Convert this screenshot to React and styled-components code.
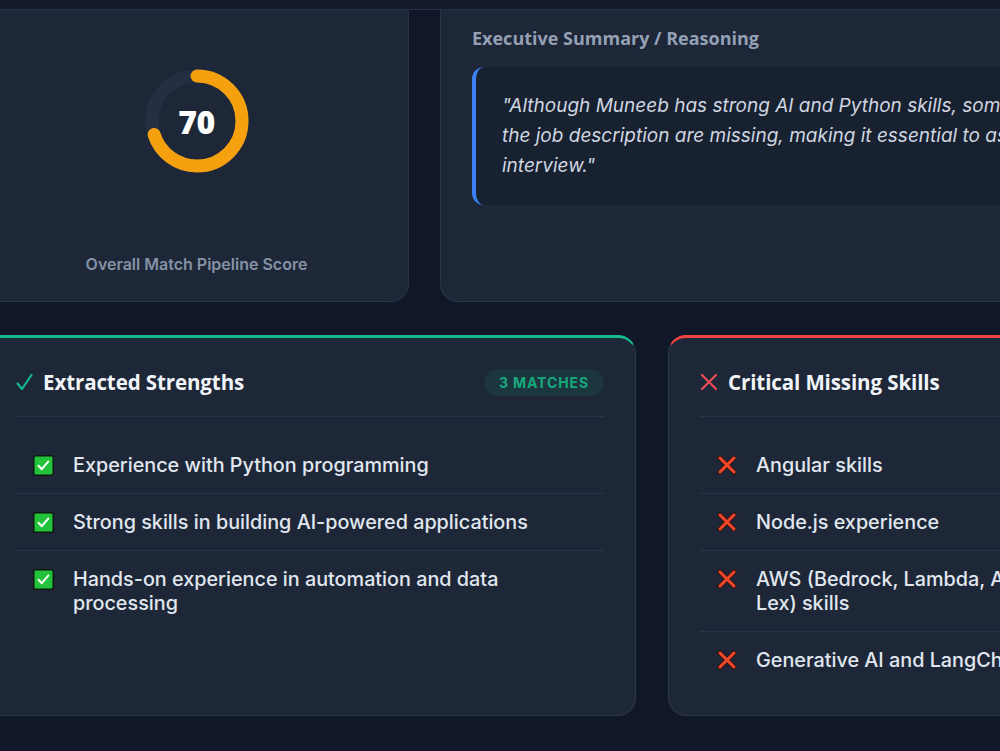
import React from 'react';
import styled, { createGlobalStyle } from 'styled-components';

const GlobalStyle = createGlobalStyle`
  html, body {
    margin: 0;
    padding: 0;
    background: #0f1729;
    overflow: hidden;
  }
  body {
    font-family: Inter, "Noto Sans", sans-serif;
    color: #e2e8f0;
  }
  * { box-sizing: border-box; }
`;

const TopBar = styled.div`
  position: fixed;
  top: 0;
  left: 0;
  right: 0;
  height: 10px;
  background: #121a2b;
  border-bottom: 1px solid #263145;
  z-index: 5;
`;

const Page = styled.main`
  width: 1336px;
  margin: -10px 0 0 -16px;
  display: flex;
  flex-direction: column;
  gap: 33px;
`;

const TopRow = styled.div`
  display: grid;
  grid-template-columns: 425px 1fr;
  gap: 31px;
`;

const BottomRow = styled.div`
  display: grid;
  grid-template-columns: 1fr 1fr;
  gap: 32px;
`;

const Card = styled.section`
  background: #1d2738;
  border: 1px solid rgba(148, 163, 184, 0.1);
  border-radius: 18px;
  height: 312px;
`;

const ScoreCard = styled(Card)`
  display: flex;
  flex-direction: column;
  align-items: center;
  justify-content: space-between;
  padding: 77px 24px 27px;
`;

const Ring = styled.div`
  position: relative;
  width: 106px;
  height: 106px;
`;

const RingValue = styled.span`
  position: absolute;
  inset: 0;
  display: flex;
  align-items: center;
  justify-content: center;
  font-family: "Open Sans", "Noto Sans", sans-serif;
  font-weight: 800;
  font-size: 32px;
  color: #ffffff;
  letter-spacing: -0.5px;
`;

const ScoreLabel = styled.p`
  margin: 0;
  font-size: 16px;
  line-height: 20px;
  font-weight: 600;
  color: #8592a6;
`;

const SummaryCard = styled(Card)`
  padding: 35px 31px 31px;
`;

const SectionTitle = styled.h3`
  margin: 0 0 17px;
  font-family: "Open Sans", "Noto Sans", sans-serif;
  font-size: 18px;
  line-height: 24px;
  font-weight: 700;
  color: #94a0b3;
`;

const Quote = styled.blockquote`
  margin: 0;
  background: #182130;
  border-left: 4px solid #3b82f6;
  border-radius: 12px;
  padding: 24px 26px;
  font-style: italic;
  font-size: 19px;
  line-height: 30px;
  color: #cfd6e0;
`;

const ListCard = styled.section`
  background: #1d2738;
  border: 1px solid rgba(148, 163, 184, 0.1);
  border-top: 3px solid ${p => p.$accent};
  border-radius: 18px;
  height: 381px;
  padding: 0 31px;
`;

const CardHeader = styled.header`
  display: flex;
  align-items: center;
  justify-content: space-between;
  padding: 30px 0 20px;
  border-bottom: 1px solid #2a3548;
`;

const HeaderTitle = styled.h2`
  margin: 0;
  display: flex;
  align-items: center;
  gap: 10px;
  font-family: "Open Sans", "Noto Sans", sans-serif;
  font-size: 20.5px;
  line-height: 28px;
  font-weight: 700;
  letter-spacing: -0.1px;
  color: #f1f5f9;
`;

const Badge = styled.span`
  background: rgba(16, 185, 129, 0.1);
  color: #17a97c;
  font-size: 14px;
  font-weight: 700;
  letter-spacing: 0.9px;
  line-height: 27px;
  padding: 0 15px;
  border-radius: 14px;
`;

const List = styled.ul`
  list-style: none;
  margin: 20px 0 0;
  padding: 0;
`;

const Item = styled.li`
  display: flex;
  align-items: flex-start;
  gap: 19px;
  padding: 16px 19px 16px 17px;
  font-size: 19.8px;
  line-height: 24px;
  font-weight: 500;
  color: #e1e7ef;
  & + & { border-top: 1px solid #2a3548; }
`;

const IconSlot = styled.span`
  flex: none;
  display: flex;
  align-items: center;
  height: 24px;
`;

const ScoreRing = ({ value }) => {
  const r = 45;
  const c = 2 * Math.PI * r;
  return (
    <Ring>
      <svg width="106" height="106" viewBox="0 0 106 106">
        <circle cx="53" cy="53" r={r} fill="none" stroke="#243042" strokeWidth="13" />
        <circle
          cx="53" cy="53" r={r} fill="none" stroke="#f5a00f" strokeWidth="13"
          strokeLinecap="round"
          strokeDasharray={`${(c * value) / 100} ${c}`}
          transform="rotate(-90 53 53)"
        />
      </svg>
      <RingValue>{value}</RingValue>
    </Ring>
  );
};

const TitleCheck = () => (
  <svg width="17" height="18" viewBox="0 0 17 18">
    <path d="M1.5 10.5 L6 16 L15.5 2" fill="none" stroke="#14b890" strokeWidth="2.2" strokeLinecap="round" strokeLinejoin="round" />
  </svg>
);

const TitleCross = () => (
  <svg width="18" height="18" viewBox="0 0 18 18">
    <path d="M2 2 L16 16 M16 2 L2 16" fill="none" stroke="#ef4d57" strokeWidth="2.2" strokeLinecap="round" />
  </svg>
);

const CheckBox = () => (
  <svg width="21" height="21" viewBox="0 0 21 21">
    <rect x="0.75" y="0.75" width="19.5" height="19.5" rx="2" fill="#22c33a" stroke="#0c1a10" strokeWidth="1.5" />
    <path d="M5.5 10.8 L8.8 14.2 L15.2 6.6" fill="none" stroke="#ffffff" strokeWidth="2" strokeLinecap="round" strokeLinejoin="round" />
  </svg>
);

const Cross = () => (
  <svg width="20" height="20" viewBox="0 0 20 20">
    <path d="M3 3 L17 17 M17 3 L3 17" fill="none" stroke="#3a1410" strokeWidth="5" strokeLinecap="round" />
    <path d="M3 3 L17 17 M17 3 L3 17" fill="none" stroke="#f0462a" strokeWidth="3" strokeLinecap="round" />
  </svg>
);

const strengths = [
  'Experience with Python programming',
  'Strong skills in building AI-powered applications',
  'Hands-on experience in automation and data processing',
];

const gaps = [
  'Angular skills',
  'Node.js experience',
  'AWS (Bedrock, Lambda, API Gateway, Comprehend, Lex) skills',
  'Generative AI and LangChain',
];

const App = () => (
  <>
    <GlobalStyle />
    <TopBar />
    <Page>
      <TopRow>
        <ScoreCard>
          <ScoreRing value={70} />
          <ScoreLabel>Overall Match Pipeline Score</ScoreLabel>
        </ScoreCard>
        <SummaryCard>
          <SectionTitle>Executive Summary / Reasoning</SectionTitle>
          <Quote>
            "Although Muneeb has strong AI and Python skills, some key requirements listed in
            the job description are missing, making it essential to assess his adaptability in an
            interview."
          </Quote>
        </SummaryCard>
      </TopRow>
      <BottomRow>
        <ListCard $accent="#16b98a">
          <CardHeader>
            <HeaderTitle><TitleCheck />Extracted Strengths</HeaderTitle>
            <Badge>{strengths.length} MATCHES</Badge>
          </CardHeader>
          <List>
            {strengths.map(s => (
              <Item key={s}><IconSlot><CheckBox /></IconSlot>{s}</Item>
            ))}
          </List>
        </ListCard>
        <ListCard $accent="#ef4444">
          <CardHeader>
            <HeaderTitle><TitleCross />Critical Missing Skills</HeaderTitle>
            <Badge style={{ visibility: 'hidden' }}>0</Badge>
          </CardHeader>
          <List>
            {gaps.map(s => (
              <Item key={s}><IconSlot><Cross /></IconSlot>{s}</Item>
            ))}
          </List>
        </ListCard>
      </BottomRow>
    </Page>
  </>
);

export default App;
